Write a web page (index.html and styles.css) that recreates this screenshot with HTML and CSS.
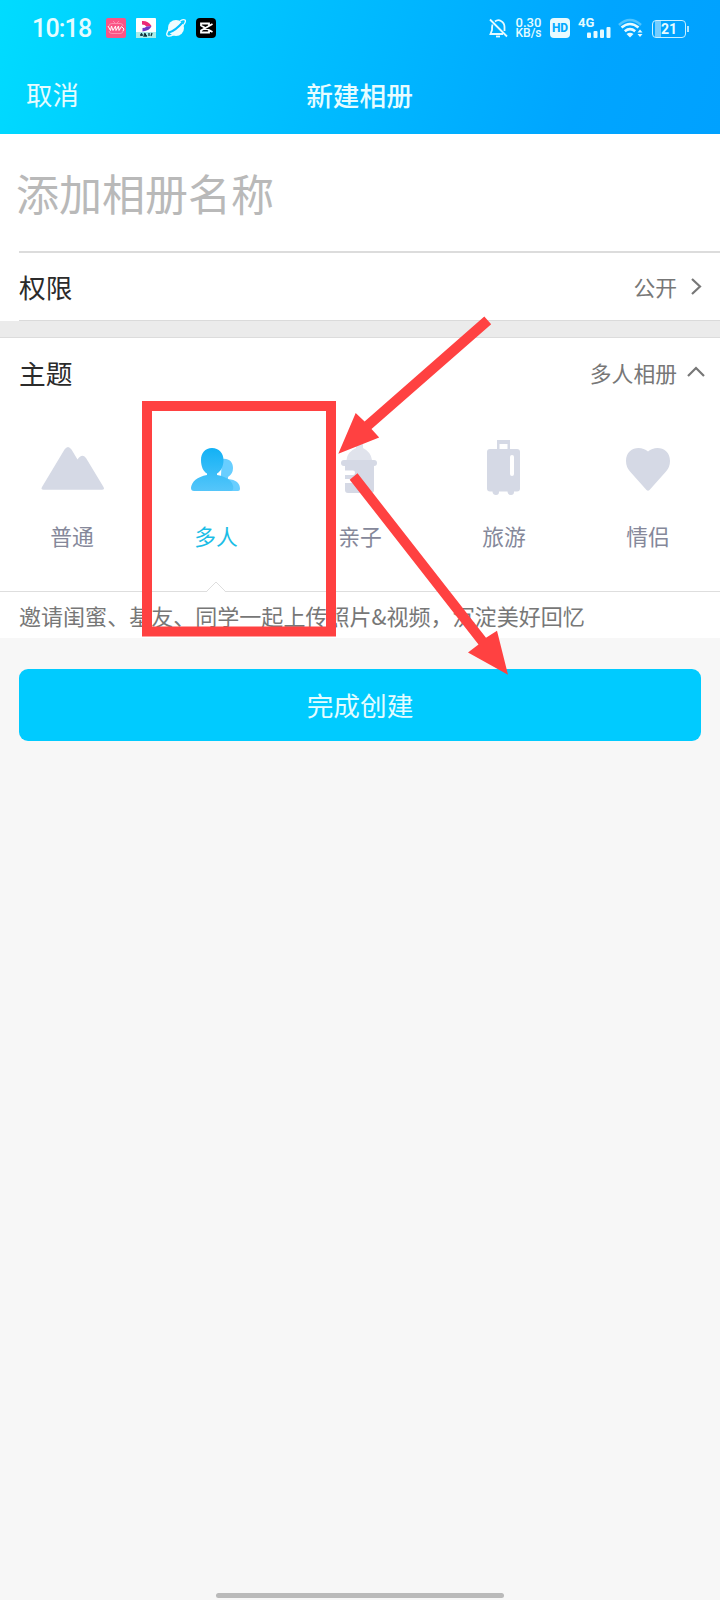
FILE: index.html
```html
<!DOCTYPE html>
<html lang="zh-CN">
<head>
<meta charset="utf-8">
<title>新建相册</title>
<link rel="stylesheet" href="styles.css">
</head>
<body>
<div class="screen">
  <header class="header">
    <div class="status">
      <span class="time">10:18</span>
      <div class="apps">
        <svg width="20" height="20" viewBox="0 0 20 20"><rect width="20" height="20" rx="2" fill="#fb5486"/><path d="M7 3l2 2M13 3l-2 2M3 8Q3 5.500 6 5.500H14Q17 5.500 17 8M3 13Q3 15.500 6 15.500H14Q17 15.500 17 13" fill="none" stroke="#fd8fb0" stroke-width="1"/><path d="M2 8l2.500 4.500 1-4.500 1.500 4.500 2.500-4.500.5 4.500 2.500-4.500.5 4.500 2.500-4 2.500 2.500-1 2" fill="none" stroke="#fff" stroke-width="1"/></svg>
        <svg width="20" height="20" viewBox="0 0 20 20"><rect width="20" height="20" rx="1" fill="#fff"/><rect y="14" width="20" height="6" fill="#a9ece9"/><path d="M6 3Q12 2.500 15.500 8L10.500 8.500Q9 6.500 6 6.500Z" fill="#ed2875"/><path d="M15.500 8Q14 12.500 6.500 13.500V10Q9 10 10.500 8.500Z" fill="#7137c4"/><path d="M4 17h3M5.500 15v3M9 15l-1 3h3M13 15v3M16 15l-1 3" stroke="#163b43" stroke-width="1.300"/></svg>
        <svg width="20" height="20" viewBox="0 0 20 20"><circle cx="10" cy="10" r="8" fill="#effcff"/><path d="M3 14.500Q9 13 16.500 4.500" fill="none" stroke="#00bfff" stroke-width="2"/><path d="M3 11Q-1 17 2 18Q6 19 13 12Q21 4 19 2Q17.500 1 14 3" fill="none" stroke="#effcff" stroke-width="1.400"/></svg>
        <svg width="20" height="20" viewBox="0 0 20 20"><rect width="20" height="20" rx="4" fill="#000"/><path d="M16.500 6L5 12.500V14.500H13V12M16.500 14L5 7.500V5.500H13V8" fill="none" stroke="#fff" stroke-width="1.800"/></svg>
      </div>
      <div class="indicators">
        <svg width="19" height="20" viewBox="0 0 19 20" fill="none" stroke="#e6faff" stroke-width="1.800"><path d="M1 1.500L18 18.500M3.500 6.500Q3 8 3 12L1.500 16H14M6 3.500Q9 1 12 3Q15.500 5 15.500 9V13"/><path d="M7 18.500h4"/></svg>
        <div class="speed"><span>0.30</span><span>KB/s</span></div>
        <span class="hd">HD</span>
        <div class="cell"><span class="net">4G</span><svg class="bars" width="24" height="12" viewBox="0 0 24 12" fill="#e6faff"><rect y="6.500" width="4" height="5.500" rx="1"/><rect x="6.500" y="5" width="4" height="7" rx="1"/><rect x="13" y="3.500" width="4" height="8.500" rx="1"/><rect x="19.500" y="1" width="4" height="11" rx="1"/></svg></div>
        <svg class="wifi" width="25" height="20" viewBox="0 0 25 20" fill="none" stroke-width="2.600"><path d="M1 7Q12 -3 23 7" stroke="#50c4ff"/><path d="M3.500 9.500Q12 2.500 20.500 9.500M6.800 13.200Q12 9 17.200 13.200" stroke="#e6faff"/><path d="M8.500 16Q12 13.500 15.500 16L12 19.500Z" fill="#e6faff" stroke="none"/><path d="M19.500 14.500L22 11.500l2.500 3ZM19.500 16L22 19l2.500-3Z" fill="#e6faff" stroke="none"/></svg>
        <div class="battery"><span>21</span></div>
      </div>
    </div>
    <nav class="navbar"><span class="cancel">取消</span><h1>新建相册</h1><span></span></nav>
  </header>

  <main>
    <div class="name"><span>添加相册名称</span></div>
    <div class="row permission"><span class="label">权限</span><span class="value">公开</span><svg class="chev" width="18" height="18" viewBox="0 0 18 18"><path d="M5 1L13 8.500L5 16"/></svg></div>
    <div class="band"></div>
    <section class="theme">
      <div class="row topic"><span class="label">主题</span><span class="value">多人相册</span><svg class="chev" width="18" height="18" viewBox="0 0 18 18"><path d="M1 12L9 4L17 12"/></svg></div>
      <div class="options">
        <div class="option">
          <svg width="144" height="66" viewBox="0 436 144 66"><path d="M42 487L64.500 449.500Q68 444.500 71.500 449.500L77.500 459.500Q82 453 86 458L103.500 487Q105 489.700 102 489.700H43.500Q40.500 489.700 42 487Z" fill="#d5d9e5"/></svg>
          <span>普通</span>
        </div>
        <div class="option active">
          <svg width="144" height="66" viewBox="144 436 144 66"><defs><linearGradient id="person" x1="0" y1="0" x2="0" y2="1"><stop offset="0" stop-color="#12b1f5"/><stop offset="1" stop-color="#55c6fa"/></linearGradient></defs><path d="M222 459C229 458 233 462 233 468Q233 474 228 477V479Q240 480 240 489Q240 491 238 491H220Z" fill="#68ceff"/><path d="M212 448C219 448 223.500 453 223.500 460C223.500 467 220.500 471.500 217 473.500V475Q233 478 233.300 488Q233 491 231 491H194Q191 491 191 488Q192 478 207 475V473.500C203.500 471.500 201 467 201 460C201 453 205 448 212 448Z" fill="url(#person)"/></svg>
          <span>多人</span>
        </div>
        <div class="option">
          <svg width="144" height="66" viewBox="288 436 144 66" fill="#d5d9e5"><path d="M346.500 460Q347 452 356 448V443Q356 440 359.500 440T363 443V448Q371 452 372 460Z" fill="#e0e3ec"/><rect x="341" y="460" width="36" height="6" rx="3"/><path d="M345 465H374V490Q374 493 371 493H348Q345 493 345 490V483H351Q353 483 353 481T351 479H345V475H353Q355 475 355 472.800T353 470.500H345Z"/></svg>
          <span>亲子</span>
        </div>
        <div class="option">
          <svg width="144" height="66" viewBox="432 436 144 66" fill="#d5d9e5"><path d="M497 440H510V450H507.500V444H499.500V450H497Z"/><rect x="487" y="449" width="33" height="42.500" rx="3"/><rect x="510" y="455" width="4" height="21" rx="2" fill="#fff"/><path d="M492.500 490H499V492Q499 495 496 495T492.500 492ZM507.500 490H514V492Q514 495 511 495T507.500 492Z"/></svg>
          <span>旅游</span>
        </div>
        <div class="option">
          <svg width="144" height="66" viewBox="576 436 144 66"><path d="M648 451.500C655 445 670 447 670 461Q670 467 666 471.500L649.500 490Q648 491.500 646.500 490L630 471.500Q626 467 626 461C626 447 641 445 648 451.500Z" fill="#d5d9e5"/></svg>
          <span>情侣</span>
        </div>
      </div>
      <div class="desc"><svg class="notch" width="20" height="11" viewBox="0 0 20 11"><path d="M1 10.500L10 1L19 10.500V11H1Z" fill="#fff"/><path d="M1 10L10 1L19 10" fill="none" stroke="#dedede"/></svg><span>邀请闺蜜、基友、同学一起上传照片&amp;视频，沉淀美好回忆</span></div>
    </section>
    <div class="action"><button class="create">完成创建</button></div>
  </main>
  <div class="home"></div>

  <svg class="marks" width="720" height="1600" viewBox="0 0 720 1600" fill="#ff4141">
    <rect x="147" y="406" width="184" height="225.500" fill="none" stroke="#ff4141" stroke-width="10"/>
    <path d="M484.300 316.500L491.200 324.300L371.500 429L379.200 437.500L338.300 453.700L355.700 413L364.600 421.500Z"/>
    <path d="M357.500 473.300L486 637.700L497 630.700L508 674.700L468 652.500L478.500 644.500L349.700 479.700Z"/>
  </svg>
</div>
</body>
</html>
```
FILE: styles.css
```css
* { box-sizing: border-box; }
body { margin: 0; font-family: "Noto Sans CJK SC", "Noto Sans", sans-serif; }
svg { display: block; flex: none; }
.screen { position: relative; width: 720px; height: 1600px; overflow: hidden; display: flex; flex-direction: column; background: #f7f7f7; }
.header { height: 134px; flex: none; color: #e6fcff; background: linear-gradient(108deg, #00dcff 0%, #00beff 42%, #00a5ff 80%, #00a1ff 100%); }
.status { height: 56px; display: flex; align-items: center; padding: 0 32px 0 32px; font-family: Roboto, sans-serif; }
.time { width: 74px; font-size: 25px; font-weight: 500; letter-spacing: -0.8px; white-space: nowrap; }
.apps { display: flex; gap: 10px; }
.indicators { display: flex; align-items: center; margin-left: auto; }
.speed { width: 27px; margin-left: 7px; display: flex; flex-direction: column; align-items: center; font-size: 12px; line-height: 11px; font-weight: 500; }
.speed span:first-child { font-size: 13px; }
.hd { width: 20px; height: 20px; margin-left: 8px; border-radius: 4px; background: #e6faff; color: #00a9ff; font-size: 12px; line-height: 20px; font-weight: 800; text-align: center; }
.cell { width: 33px; height: 20px; margin-left: 8px; display: flex; flex-direction: column; }
.net { font-size: 13px; line-height: 10px; height: 8px; font-weight: 700; }
.bars { align-self: flex-end; }
.wifi { margin-left: 7px; }
.battery { position: relative; width: 34px; height: 18px; margin: 2px 2px 0 9px; border: 1.5px solid #c8f0ff; border-radius: 4px; background: linear-gradient(90deg, transparent 2px, #74cdff 2px, #74cdff 8px, transparent 8px); font-size: 14px; line-height: 16px; font-weight: 700; text-align: center; }
.battery::after { content: ""; position: absolute; right: -4px; top: 5px; width: 2px; height: 6px; background: #b0e4ff; }
.navbar { height: 76px; display: grid; grid-template-columns: 1fr auto 1fr; align-items: center; padding: 0 27px 0 26px; }
.navbar .cancel { font-size: 26.400px; line-height: 36px; }
h1 { margin: 2px 0 0; font-size: 26.700px; line-height: 36px; font-weight: 500; }
.name { height: 119px; padding-left: 16px; background: linear-gradient(#dcdcdc, #dcdcdc) 19px 117px / 701px 2px no-repeat #fff; color: #b9b9b9; font-size: 43px; line-height: 116px; }
.row { display: flex; align-items: center; padding: 0 15px 0 19px; }
.permission { height: 68px; padding-bottom: 1px; background: linear-gradient(#dadada, #dadada) 19px 67px / 701px 1px no-repeat #fff; }
.label { flex: 1; font-size: 26.700px; line-height: 36px; color: #2b2b2b; }
.value { font-size: 21.800px; line-height: 30px; color: #777; }
.chev { margin-left: 10px; fill: none; stroke: #777; stroke-width: 2.2; }
.band { height: 17px; background: #ebebeb; border-bottom: 1px solid #dcdcdc; }
.theme { background: #fff; }
.topic { height: 72px; padding-bottom: 2px; }
.options { display: grid; grid-template-columns: repeat(5, 1fr); height: 181px; padding-top: 26px; }
.option { display: flex; flex-direction: column; align-items: center; gap: 19px; color: #85889a; font-size: 21.800px; line-height: 30px; }
.option.active { color: #1bbde6; }
.desc { position: relative; height: 47px; border-top: 1px solid #dedede; padding-left: 19px; color: #777; font-size: 22.040px; line-height: 47px; white-space: nowrap; }
.notch { position: absolute; left: 206px; top: -11px; }
.action { padding: 31px 19px 0; }
.create { display: block; width: 100%; height: 72px; padding: 0; border: 0; border-radius: 9px; background: #00cbff; color: #e4fcff; font-family: inherit; font-size: 26.700px; line-height: 36px; }
.home { width: 288px; height: 5px; margin: auto auto 2px; border-radius: 3px; background: #bababa; }
.marks { position: absolute; inset: 0; }
```
